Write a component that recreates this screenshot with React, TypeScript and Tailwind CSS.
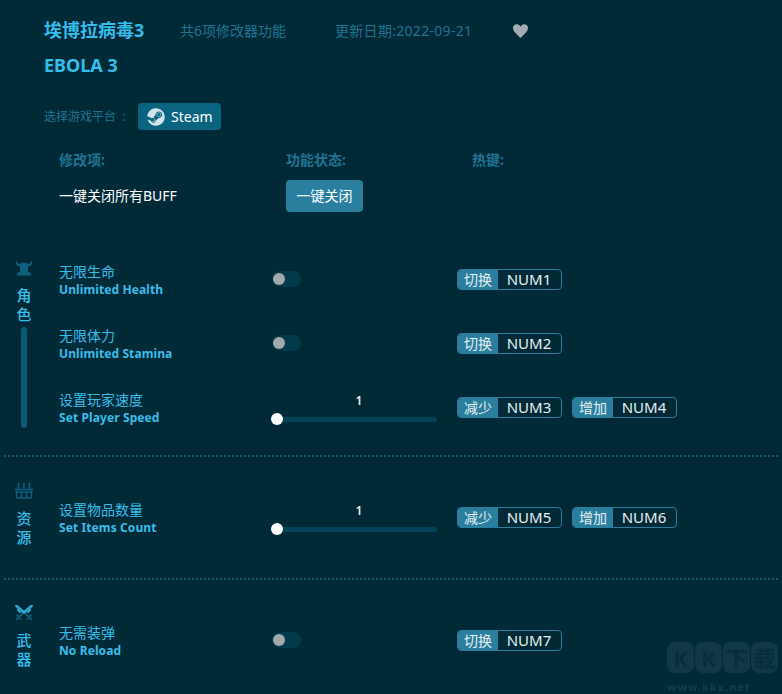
import React from 'react';
import { FaSteam } from 'react-icons/fa';

const FONT = "font-['Noto_Sans','Noto_Sans_CJK_SC',sans-serif]";

const Hotkey = ({ label, k }: { label: string; k: string }) => (
  <div className="flex h-[21px] w-[105px] items-stretch overflow-hidden rounded-[4px] border border-[#2a7d9c]">
    <div className="flex w-[40px] items-center justify-center bg-[#2a7f9f] text-[14px] text-[#e6eef1]">{label}</div>
    <div className="flex flex-1 items-center justify-center pr-[1px] text-[15px] text-[#e6eef1]">{k}</div>
  </div>
);

const Toggle = () => (
  <div className="flex h-[16px] w-[29px] items-center rounded-full bg-[#033a4b] pl-[1px]">
    <div className="h-[12px] w-[12px] rounded-full bg-[#a3a8ab]" />
  </div>
);

const Slider = () => (
  <div className="relative mb-[4px] ml-[5px] w-[160px] pt-[5px]">
    <div className="mb-[8px] pl-[4px] text-center text-[12px] font-semibold leading-[16px] text-[#e6eef1]">1</div>
    <div className="h-[5px] rounded-full bg-[#044257]" />
    <div className="absolute bottom-[-3px] left-[-6px] h-[12px] w-[12px] rounded-full bg-white" />
  </div>
);

type Row = { cn: string; en: string; control: 'toggle' | 'slider'; keys: [string, string][] };

const FeatureRow = ({ row }: { row: Row }) => (
  <div className="flex h-[64px] items-center">
    <div className="w-[224px] pl-[11px] pt-[2px]">
      <div className="text-[14px] leading-[17px] text-[#38bdea]">{row.cn}</div>
      <div className="mt-[1px] text-[12px] font-bold leading-[17px] tracking-[0.1px] text-[#38bdea]">{row.en}</div>
    </div>
    <div className="w-[185px]">{row.control === 'toggle' ? <Toggle /> : <Slider />}</div>
    <div className="flex gap-[10px]">
      {row.keys.map(([l, k]) => (
        <Hotkey key={k} label={l} k={k} />
      ))}
    </div>
  </div>
);

const HelmIcon = () => (
  <svg width="18" height="16" viewBox="0 0 18 16" fill="#0e5f7c">
    <path d="M1 0 L2.5 3 Q4 4.5 6 3.5 Q9 1.5 12 3.5 Q14 4.5 15.5 3 L17 0 L17 4 Q15.5 6.5 13 6.5 L13 12 L16 13 L16 15.5 L2 15.5 L2 13 L5 12 L5 6.5 Q2.5 6.5 1 4 Z" />
  </svg>
);

const BasketIcon = () => (
  <svg width="18" height="16" viewBox="0 0 18 16" fill="none" stroke="#0e5f7c" strokeWidth="1.6">
    <path d="M3.5 0 V6 M8.9 0 V5 M14.5 0 V6" />
    <path d="M1 6.5 H17 L16 15 H2 Z" />
    <path d="M1.5 9 H16.5 M6.5 9 V15 M11.5 9 V15" />
  </svg>
);

const SwordsIcon = () => (
  <svg width="18" height="17" viewBox="0 0 18 17" fill="none" strokeLinecap="round">
    <path d="M1.5 1 L9 7.5 L16.5 1" stroke="#2fa5cc" strokeWidth="2.8" />
    <path d="M3 5 L5 7 M15 5 L13 7" stroke="#2fa5cc" strokeWidth="2" />
    <path d="M7 9 L1.5 14.5 M11 9 L16.5 14.5 M2 10.5 L5.5 14 M16 10.5 L12.5 14" stroke="#10566f" strokeWidth="2" />
  </svg>
);

const Section = ({ icon, name, rows, bar, className, sideClass, rowsClass }: { icon: React.ReactNode; name: [string, string]; rows: Row[]; bar?: boolean; className: string; sideClass?: string; rowsClass?: string }) => (
  <div className={`flex ${className}`}>
    <div className={`flex w-[48px] flex-col items-center ${sideClass ?? ''}`}>
      <div className="flex h-[16px] items-center justify-center">{icon}</div>
      <div className="mt-[10px] text-[15px] font-medium leading-[19px] text-[#38bdea]">{name[0]}</div>
      <div className="text-[15px] font-medium leading-[19px] text-[#38bdea]">{name[1]}</div>
      {bar && <div className="mt-[3px] h-[101px] w-[6px] rounded-full bg-[#0a5a76]" />}
    </div>
    <div className={`flex-1 ${rowsClass ?? ''}`}>
      {rows.map((r) => (
        <FeatureRow key={r.en} row={r} />
      ))}
    </div>
  </div>
);

const Divider = () => <div className="mx-[4px] border-t-2 border-dotted border-[#0f5a72]" />;

const WATERMARK = ['K', 'K', '下', '载'];

export default function App() {
  return (
    <div className={`relative h-[694px] w-[782px] overflow-hidden bg-[#012a37] ${FONT}`}>
      <div className="pl-[44px] pt-[18px]">
        <div className="flex h-[25px] items-center">
          <div className="w-[136px] text-[18px] font-bold text-[#35bdec]">埃博拉病毒3</div>
          <div className="w-[155px] text-[14px] text-[#1f7391]">共6项修改器功能</div>
          <div className="w-[178px] text-[14px] tracking-[0.3px] text-[#1f7391]">更新日期:2022-09-21</div>
          <svg width="15" height="14" viewBox="0 0 24 22" fill="#a3adb1">
            <path d="M12 22 C5 15 0 11 0 6 C0 2 3 0 6 0 C9 0 11 2 12 4 C13 2 15 0 18 0 C21 0 24 2 24 6 C24 11 19 15 12 22 Z" />
          </svg>
        </div>
        <div className="mt-[10px] text-[18px] font-bold leading-[25px] text-[#35bdec]">EBOLA 3</div>
        <div className="mt-[25px] flex items-center">
          <div className="w-[94px] pt-[1px] text-[12px] text-[#1f7391]">选择游戏平台{'\u00a0\u00a0'}:</div>
          <div className="flex h-[27px] w-[83px] items-center gap-[6px] rounded-[4px] bg-[#0a6480] pl-[9px] text-[14px] text-white">
            <FaSteam className="h-[18px] w-[18px] text-[#d4e2ea]" />
            Steam
          </div>
        </div>
        <div className="mt-[19px] flex h-[20px] items-center pl-[15px] text-[14px] font-bold text-[#1f7391]">
          <div className="w-[227px]">修改项:</div>
          <div className="w-[186px]">功能状态:</div>
          <div>热键:</div>
        </div>
        <div className="mt-[11px] flex items-center pl-[15px]">
          <div className="w-[227px] pb-[2px] text-[14px] text-white">一键关闭所有BUFF</div>
          <div className="flex h-[32px] w-[77px] items-center justify-center rounded-[4px] bg-[#2a7f9f] pb-[1px] text-[14px] text-white">一键关闭</div>
        </div>
      </div>

      <Section
        className="mt-[35px] h-[193px]"
        sideClass="pt-[13px]"
        icon={<HelmIcon />}
        name={['角', '色']}
        bar
        rows={[
          { cn: '无限生命', en: 'Unlimited Health', control: 'toggle', keys: [['切换', 'NUM1']] },
          { cn: '无限体力', en: 'Unlimited Stamina', control: 'toggle', keys: [['切换', 'NUM2']] },
          { cn: '设置玩家速度', en: 'Set Player Speed', control: 'slider', keys: [['减少', 'NUM3'], ['增加', 'NUM4']] },
        ]}
      />
      <div className="mt-[15px]">
        <Divider />
      </div>
      <Section
        className="mt-[26px] h-[95px]"
        rowsClass="pt-[2px]"
        icon={<BasketIcon />}
        name={['资', '源']}
        rows={[{ cn: '设置物品数量', en: 'Set Items Count', control: 'slider', keys: [['减少', 'NUM5'], ['增加', 'NUM6']] }]}
      />
      <Divider />
      <Section
        className="mt-[25px]"
        rowsClass="pt-[3px]"
        icon={<SwordsIcon />}
        name={['武', '器']}
        rows={[{ cn: '无需装弹', en: 'No Reload', control: 'toggle', keys: [['切换', 'NUM7']] }]}
      />

      {/* watermark */}
      <div className="absolute right-[4px] top-[642px] flex flex-col items-start">
        <div className="flex gap-[1px]">
          {WATERMARK.map((c, i) => (
            <div key={i} className="flex h-[31px] w-[27px] items-center justify-center rounded-[8px] bg-[#113945] text-[22px] font-bold leading-none text-[#062e3b]">
              {c}
            </div>
          ))}
        </div>
        <div className="mt-[7px] text-[11px] font-bold leading-[13px] tracking-[1px] text-[#143c49]">www.kkx.net</div>
      </div>
    </div>
  );
}
